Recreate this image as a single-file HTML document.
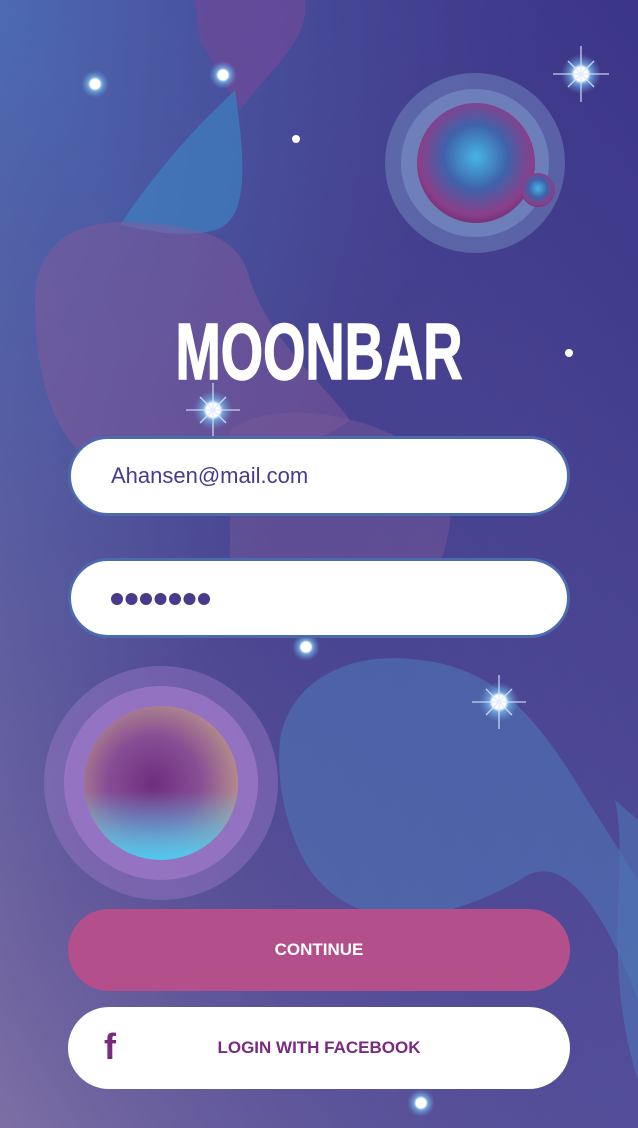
<!DOCTYPE html>
<html><head><meta charset="utf-8"><style>
*{margin:0;padding:0;box-sizing:border-box}
body{width:638px;height:1128px;overflow:hidden;position:relative;font-family:"Liberation Sans",sans-serif}
svg.bg{position:absolute;left:0;top:0}
.title{position:absolute;left:0;width:638px;top:306px;text-align:center;color:#fff;font-weight:bold;font-size:80px;letter-spacing:0px;transform:scaleX(0.68);transform-origin:319px 0;font-family:"Liberation Sans Narrow","Liberation Sans",sans-serif;-webkit-text-stroke:1.5px #fff}
.inp{position:absolute;left:68px;width:502px;height:80px;border-radius:40px;background:#fff;border:3px solid #4c6aad}
.inp span{position:absolute;left:40px;top:24px;font-size:22px;color:#4a3a8c}
.btn{position:absolute;left:68px;width:502px;height:82px;border-radius:41px;text-align:center;line-height:82px;font-weight:bold;font-size:17px}
</style></head><body>
<svg class="bg" width="638" height="1128" viewBox="0 0 638 1128">
<defs>
<linearGradient id="bg" x1="0" y1="0" x2="1" y2="1">
<stop offset="0" stop-color="#4e7bc0"/><stop offset="0.45" stop-color="#464190"/><stop offset="1" stop-color="#58529e"/>
</linearGradient>
<linearGradient id="bg2" x1="1" y1="0" x2="0" y2="1">
<stop offset="0" stop-color="#3a3388" stop-opacity="0.9"/><stop offset="0.5" stop-color="#4a4590" stop-opacity="0.3"/><stop offset="1" stop-color="#8a7aaa" stop-opacity="0.8"/>
</linearGradient>
<radialGradient id="p1" cx="0.5" cy="0.45" r="0.6"><stop offset="0" stop-color="#45b5e5"/><stop offset="0.45" stop-color="#3f62aa"/><stop offset="0.8" stop-color="#8a3f8a"/><stop offset="1" stop-color="#6a2a6a"/></radialGradient>
<radialGradient id="p2" cx="0.45" cy="0.5" r="0.6"><stop offset="0" stop-color="#7a1f70"/><stop offset="0.5" stop-color="#a05090"/><stop offset="1" stop-color="#f0c080"/></radialGradient>
<linearGradient id="p2b" x1="0" y1="0" x2="0" y2="1"><stop offset="0.55" stop-color="#4fc8f0" stop-opacity="0"/><stop offset="1" stop-color="#4fc8f0"/></linearGradient>
<radialGradient id="st"><stop offset="0" stop-color="#fff"/><stop offset="0.35" stop-color="#fff"/><stop offset="0.5" stop-color="#7ab8e8" stop-opacity="0.8"/><stop offset="1" stop-color="#5a8ed0" stop-opacity="0"/></radialGradient>
</defs>
<rect width="638" height="1128" fill="url(#bg)"/>
<rect width="638" height="1128" fill="url(#bg2)"/>
<path d="M195 0 L305 0 C310 40 270 70 240 110 L200 40Z" fill="#6a4a9a" opacity="0.8"/>
<path d="M120 225 C170 150 215 110 235 90 C245 160 250 220 215 230 C180 240 140 228 120 225Z" fill="#3f80c0" opacity="0.7"/>
<path d="M35 300 C35 240 80 220 130 222 C200 226 240 235 250 280 C270 340 320 380 350 420 C300 460 200 460 140 470 C80 480 35 420 35 300Z" fill="#8a5a9a" opacity="0.45"/>
<path d="M230 430 C270 400 360 410 420 450 C470 480 450 560 420 600 C380 650 260 650 230 600Z" fill="#7a5a9a" opacity="0.45"/>
<path d="M280 740 C290 680 350 650 420 660 C520 670 560 760 600 820 L638 880 L638 1000 C600 900 560 850 520 880 C450 920 360 940 310 870 C285 830 276 780 280 740Z" fill="#4f75b5" opacity="0.6"/>
<path d="M615 800 C630 870 600 960 638 1080 L638 820Z" fill="#4f75b5" opacity="0.6"/>
<circle cx="475" cy="163" r="90" fill="#7a92c8" opacity="0.45"/>
<circle cx="475" cy="163" r="74" fill="#7a92c8" opacity="0.6"/>
<ellipse cx="476" cy="163" rx="59" ry="60" fill="url(#p1)"/>
<circle cx="538" cy="190" r="17" fill="url(#p1)"/>
<circle cx="161" cy="783" r="117" fill="#9a78c8" opacity="0.45"/>
<circle cx="161" cy="783" r="97" fill="#9e78c8" opacity="0.75"/>
<circle cx="161" cy="783" r="77" fill="url(#p2)"/>
<circle cx="161" cy="783" r="77" fill="#5a4a9e" opacity="0.35"/>
<circle cx="161" cy="783" r="77" fill="url(#p2b)"/>
<g fill="url(#st)">
<circle cx="95" cy="84" r="14"/><circle cx="223" cy="75" r="14"/><circle cx="306" cy="647" r="14"/><circle cx="421" cy="1103" r="14"/>
<circle cx="581" cy="74" r="20"/><circle cx="213" cy="410" r="20"/><circle cx="499" cy="702" r="20"/>
</g>
<g fill="#fff"><circle cx="296" cy="139" r="4"/><circle cx="569" cy="353" r="4"/></g>
<g stroke="#dfe8ff" stroke-width="1.3" opacity="0.85">
<path d="M581 46V102M553 74H609M568 61L594 87M594 61L568 87"/>
<path d="M213 383V437M186 410H240M200 397L226 423M226 397L200 423"/>
<path d="M499 675V729M472 702H526M486 689L512 715M512 689L486 715"/>
</g>
</svg>
<div class="title">MOONBAR</div>
<div class="inp" style="top:436px"><span>Ahansen@mail.com</span></div>
<div class="inp" style="top:558px"><svg style="position:absolute;left:40px;top:31px" width="100" height="14"><g fill="#4a3a8c"><circle cx="6" cy="7" r="6"/><circle cx="20.5" cy="7" r="6"/><circle cx="35" cy="7" r="6"/><circle cx="49.5" cy="7" r="6"/><circle cx="64" cy="7" r="6"/><circle cx="78.5" cy="7" r="6"/><circle cx="93" cy="7" r="6"/></g></svg></div>
<div class="btn" style="top:909px;background:#b34f8a;color:#fff">CONTINUE</div>
<div class="btn" style="top:1007px;background:#fff;color:#7a2a7e">LOGIN WITH FACEBOOK
<span style="position:absolute;left:36px;top:-1px;font-size:36px;font-weight:bold;color:#7a2a7e">f</span></div>
</body></html>
